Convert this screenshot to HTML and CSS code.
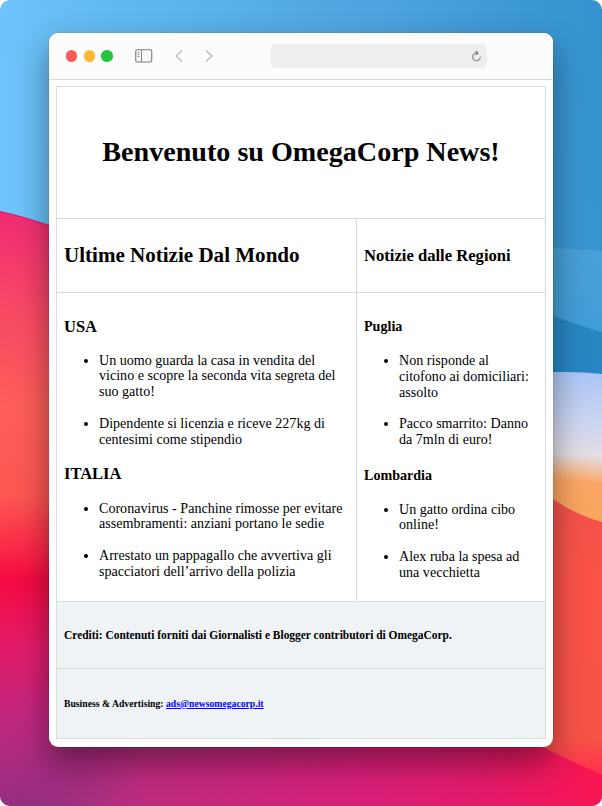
FILE: index.html
```html
<!DOCTYPE html>
<html lang="it">
<head>
<meta charset="utf-8">
<title>OmegaCorp News</title>
<link rel="stylesheet" href="styles.css">
</head>
<body>
<div class="desktop">
  <svg class="wallpaper" viewBox="0 0 602 806" preserveAspectRatio="none" aria-hidden="true">
    <defs>
      <linearGradient id="sky" x1="0" y1="0.1" x2="1" y2="0"><stop offset="0" stop-color="#6ec3fa"/><stop offset=".25" stop-color="#5db8ed"/><stop offset=".6" stop-color="#4fa5df"/><stop offset="1" stop-color="#3392ce"/></linearGradient>
      <linearGradient id="wave" gradientUnits="userSpaceOnUse" x1="0" y1="210" x2="30" y2="806"><stop offset="0" stop-color="#f12b75"/><stop offset=".17" stop-color="#f84965"/><stop offset=".33" stop-color="#fd5e59"/><stop offset=".48" stop-color="#fc5751"/><stop offset=".57" stop-color="#fb2848"/><stop offset=".62" stop-color="#f40a42"/><stop offset=".73" stop-color="#e31b68"/><stop offset=".86" stop-color="#bd2880"/><stop offset="1" stop-color="#942e80"/></linearGradient>
      <linearGradient id="floor" gradientUnits="userSpaceOnUse" x1="0" y1="820" x2="590" y2="700"><stop offset="0" stop-color="#92307f"/><stop offset=".25" stop-color="#be2c7e"/><stop offset=".6" stop-color="#d8207a"/><stop offset=".8" stop-color="#e41a6b"/><stop offset="1" stop-color="#fa154f"/></linearGradient>
      <linearGradient id="fade" gradientUnits="userSpaceOnUse" x1="40" y1="745" x2="130" y2="790"><stop offset="0" stop-color="#fff" stop-opacity="0"/><stop offset="1" stop-color="#fff"/></linearGradient>
      <mask id="low"><rect width="602" height="806" fill="url(#fade)"/></mask>
      <linearGradient id="band" x1="0" y1="0" x2="0" y2="1"><stop offset="0" stop-color="#48a0d7"/><stop offset="1" stop-color="#3e9dd8"/></linearGradient>
      <linearGradient id="dawn" gradientUnits="userSpaceOnUse" x1="560" y1="372" x2="545" y2="525"><stop offset="0" stop-color="#adc6f7"/><stop offset=".3" stop-color="#cbd5ef"/><stop offset=".52" stop-color="#e3dee5"/><stop offset=".7" stop-color="#fca564"/><stop offset="1" stop-color="#f8a75c"/></linearGradient>
      <linearGradient id="coral" x1="0" y1="0" x2="0" y2="1"><stop offset="0" stop-color="#ef514b"/><stop offset=".4" stop-color="#fb5348"/><stop offset=".87" stop-color="#f85347"/><stop offset="1" stop-color="#ff2c4f"/></linearGradient>
    </defs>
    <rect width="602" height="806" fill="url(#sky)"/>
    <path d="M0 211.500Q25 217 55 227.500H400V806H0Z" fill="url(#wave)"/>
    <path d="M0 211.500Q25 217 55 227.500" fill="none" stroke="#e50b61"/>
    <path d="M500 246Q570 248 602 251V385H500Z" fill="url(#band)"/>
    <path d="M500 294Q565 322 602 332V385H500Z" fill="#2886c2"/>
    <path d="M500 372H565Q585 372 602 374V540H500Z" fill="url(#dawn)"/>
    <path d="M500 450Q551 509 602 522V780H500Z" fill="url(#coral)"/>
    <path d="M0 680H400L520 737Q565 758 602 775V806H0Z" fill="url(#floor)" mask="url(#low)"/>
  </svg>
  <main class="window">
    <header class="toolbar">
      <div class="lights"><i class="light close"></i><i class="light minimize"></i><i class="light expand"></i></div>
      <svg class="sidebar-icon" viewBox="0 0 18 14"><rect x=".75" y=".75" width="16" height="12.200" rx="1.500"/><path d="M6.500 1v12M2.500 3.500H4.500M2.500 5.500H4.500M2.500 7.500H4.500"/></svg>
      <svg class="chevron" viewBox="0 0 8 14"><path d="M7 1.200L1.200 7L7 12.800"/></svg>
      <svg class="chevron next" viewBox="0 0 8 14"><path d="M1 1.200L6.800 7L1 12.800"/></svg>
      <div class="address"><svg class="reload" viewBox="0 0 12 13"><path d="M8 3.200H6A4.200 4.200 0 1 0 10.200 7.200M5 1L7.800 3.200L5 5.400"/></svg></div>
    </header>
    <div class="page">
      <div class="cell wide masthead"><h1>Benvenuto su OmegaCorp News!</h1></div>
      <div class="cell left"><h2>Ultime Notizie Dal Mondo</h2></div>
      <div class="cell"><h3 class="regions">Notizie dalle Regioni</h3></div>
      <section class="news left">
        <h3>USA</h3>
        <ul><li>Un uomo guarda la casa in vendita del<br>vicino e scopre la seconda vita segreta del<br>suo gatto!</li><li>Dipendente si licenzia e riceve 227kg di<br>centesimi come stipendio</li></ul>
        <h3>ITALIA</h3>
        <ul><li>Coronavirus - Panchine rimosse per evitare<br>assembramenti: anziani portano le sedie</li><li>Arrestato un pappagallo che avvertiva gli<br>spacciatori dell’arrivo della polizia</li></ul>
      </section>
      <section class="news">
        <h4>Puglia</h4>
        <ul><li>Non risponde al<br>citofono ai domiciliari:<br>assolto</li><li>Pacco smarrito: Danno<br>da 7mln di euro!</li></ul>
        <h4>Lombardia</h4>
        <ul><li>Un gatto ordina cibo<br>online!</li><li>Alex ruba la spesa ad<br>una vecchietta</li></ul>
      </section>
      <footer class="cell wide shaded"><h5>Crediti: Contenuti forniti dai Giornalisti e Blogger contributori di OmegaCorp.</h5></footer>
      <footer class="cell wide shaded"><h6>Business &amp; Advertising: <a href="mailto:ads@newsomegacorp.it">ads@newsomegacorp.it</a></h6></footer>
    </div>
  </main>
</div>
</body>
</html>
```
FILE: styles.css
```css
* { box-sizing: border-box; }
body { margin: 0; background: #fff; font-family: "Liberation Serif", "Times New Roman", serif; color: #000; }
h1, h2, h3, h4, h5, h6, ul { margin: 0; }
.desktop { position: relative; width: 602px; height: 806px; overflow: hidden; border-radius: 10px; padding: 33px 49px 0; }
.wallpaper { position: absolute; inset: 0; width: 100%; height: 100%; }
.window { position: relative; width: 504px; height: 714px; background: #fff; border-radius: 9px; box-shadow: 0 0 1px rgba(0,0,0,.5), 0 15px 32px rgba(0,0,0,.42); }
.toolbar { display: flex; align-items: center; height: 47px; padding: 0 66px 0 17px; background: #fcfcfc; border-bottom: 1px solid #d9dbdc; border-radius: 9px 9px 0 0; }
.lights { display: flex; gap: 6.500px; width: 69px; }
.light { width: 11.200px; height: 11.200px; border-radius: 50%; }
.close { background: #fc5b55; }
.minimize { background: #fdb92d; }
.expand { background: #26c540; }
svg { fill: none; }
.sidebar-icon { width: 18px; height: 14px; stroke: #77797a; stroke-width: 1.100; }
.sidebar-icon path { stroke-width: .9; }
.chevron { width: 8px; height: 14px; margin-left: 22px; stroke: #bcbcbc; stroke-width: 1.400; }
.next { margin-left: 22px; }
.address { display: flex; align-items: center; justify-content: flex-end; width: 216px; height: 24.500px; margin-left: auto; padding-right: 5px; background: #eee; border-radius: 5px; }
.reload { width: 11px; height: 12px; stroke: #858585; stroke-width: 1.200; }
.page { display: grid; grid-template-columns: 300px 188px; grid-template-rows: 132px 74px 309px 67px 70px; width: 490px; margin: 6px 0 0 7px; border: 1px solid #d5dddf; border-width: 1px 1px 0; }
.cell { display: flex; align-items: center; padding-left: 7px; border-bottom: 1px solid #d5dddf; white-space: nowrap; }
.left { border-right: 1px solid #d5dddf; }
.wide { grid-column: 1 / -1; }
.masthead { justify-content: center; padding: 0; }
.shaded { background: #eff3f5; }
.news { padding: 24.500px 0 0 7px; border-bottom: 1px solid #d5dddf; white-space: nowrap; }
.news.left { padding-top: 24px; }
h1 { font-size: 28.120px; line-height: 32px; padding-bottom: 1px; }
h2 { font-size: 21.060px; line-height: 24px; padding-bottom: 1px; }
h3 { font-size: 16.500px; line-height: 20px; }
.regions { font-size: 16.620px; }
h4 { font-size: 14.080px; line-height: 16px; }
h5 { font-size: 11.440px; }
h6 { font-size: 9.700px; }
a { color: #00f; }
ul { padding-left: 35px; margin-top: 15.500px; font-size: 14.080px; line-height: 15.840px; }
li + li { margin-top: 15.840px; }
.news h3 + ul { margin-bottom: 16px; }
.news h3 + ul ~ ul { margin-top: 17px; }
h4 + ul { margin-top: 19px; margin-bottom: 18px; }
h4 + ul ~ ul { margin-top: 19px; }
.news h4 { padding-top: .500px; }
```
